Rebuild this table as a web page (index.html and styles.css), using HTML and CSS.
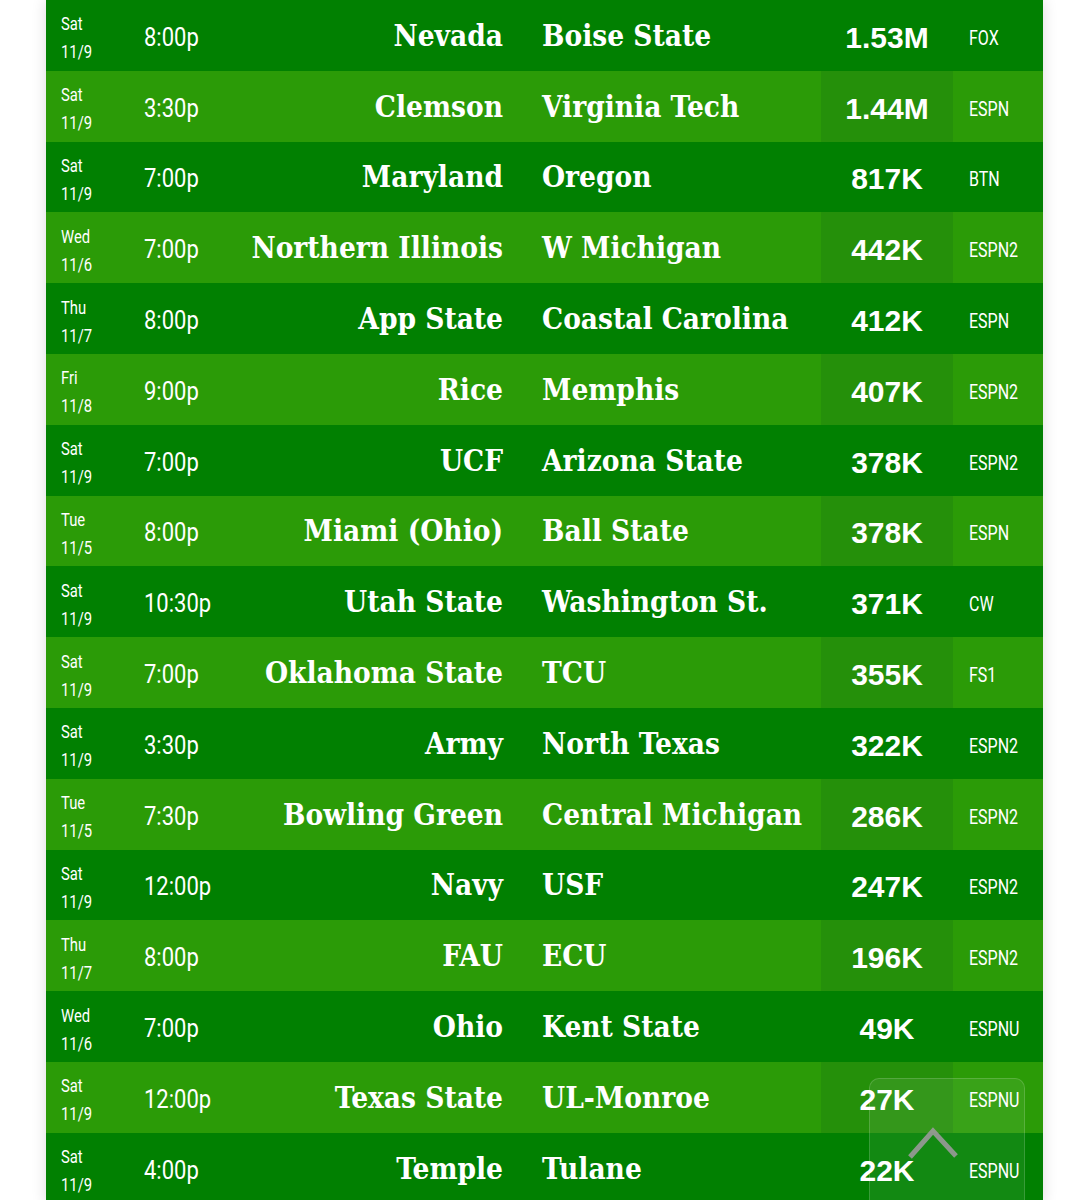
FILE: index.html
```html
<!DOCTYPE html>
<html>
<head>
<meta charset="utf-8">
<link rel="stylesheet" href="styles.css">
</head>
<body>
<div class="page">
  <div class="table">
    <div class="row dark"><div class="date">Sat<br>11/9</div><div class="time">8:00p</div><div class="home">Nevada</div><div class="away">Boise State</div><div class="views">1.53M</div><div class="net">FOX</div></div>
    <div class="row light"><div class="date">Sat<br>11/9</div><div class="time">3:30p</div><div class="home">Clemson</div><div class="away">Virginia Tech</div><div class="views">1.44M</div><div class="net">ESPN</div></div>
    <div class="row dark"><div class="date">Sat<br>11/9</div><div class="time">7:00p</div><div class="home">Maryland</div><div class="away">Oregon</div><div class="views">817K</div><div class="net">BTN</div></div>
    <div class="row light"><div class="date">Wed<br>11/6</div><div class="time">7:00p</div><div class="home">Northern Illinois</div><div class="away">W Michigan</div><div class="views">442K</div><div class="net">ESPN2</div></div>
    <div class="row dark"><div class="date">Thu<br>11/7</div><div class="time">8:00p</div><div class="home">App State</div><div class="away">Coastal Carolina</div><div class="views">412K</div><div class="net">ESPN</div></div>
    <div class="row light"><div class="date">Fri<br>11/8</div><div class="time">9:00p</div><div class="home">Rice</div><div class="away">Memphis</div><div class="views">407K</div><div class="net">ESPN2</div></div>
    <div class="row dark"><div class="date">Sat<br>11/9</div><div class="time">7:00p</div><div class="home">UCF</div><div class="away">Arizona State</div><div class="views">378K</div><div class="net">ESPN2</div></div>
    <div class="row light"><div class="date">Tue<br>11/5</div><div class="time">8:00p</div><div class="home">Miami (Ohio)</div><div class="away">Ball State</div><div class="views">378K</div><div class="net">ESPN</div></div>
    <div class="row dark"><div class="date">Sat<br>11/9</div><div class="time">10:30p</div><div class="home">Utah State</div><div class="away">Washington St.</div><div class="views">371K</div><div class="net">CW</div></div>
    <div class="row light"><div class="date">Sat<br>11/9</div><div class="time">7:00p</div><div class="home">Oklahoma State</div><div class="away">TCU</div><div class="views">355K</div><div class="net">FS1</div></div>
    <div class="row dark"><div class="date">Sat<br>11/9</div><div class="time">3:30p</div><div class="home">Army</div><div class="away">North Texas</div><div class="views">322K</div><div class="net">ESPN2</div></div>
    <div class="row light"><div class="date">Tue<br>11/5</div><div class="time">7:30p</div><div class="home">Bowling Green</div><div class="away">Central Michigan</div><div class="views">286K</div><div class="net">ESPN2</div></div>
    <div class="row dark"><div class="date">Sat<br>11/9</div><div class="time">12:00p</div><div class="home">Navy</div><div class="away">USF</div><div class="views">247K</div><div class="net">ESPN2</div></div>
    <div class="row light"><div class="date">Thu<br>11/7</div><div class="time">8:00p</div><div class="home">FAU</div><div class="away">ECU</div><div class="views">196K</div><div class="net">ESPN2</div></div>
    <div class="row dark"><div class="date">Wed<br>11/6</div><div class="time">7:00p</div><div class="home">Ohio</div><div class="away">Kent State</div><div class="views">49K</div><div class="net">ESPNU</div></div>
    <div class="row light"><div class="date">Sat<br>11/9</div><div class="time">12:00p</div><div class="home">Texas State</div><div class="away">UL-Monroe</div><div class="views">27K</div><div class="net">ESPNU</div></div>
    <div class="row dark"><div class="date">Sat<br>11/9</div><div class="time">4:00p</div><div class="home">Temple</div><div class="away">Tulane</div><div class="views">22K</div><div class="net">ESPNU</div></div>
  </div>
  <div class="totop">
    <svg width="156" height="156" viewBox="0 0 156 156"><polyline points="41,79 64,53 87,78" fill="none" stroke="#9a9a9a" stroke-opacity="0.9" stroke-width="5"/></svg>
  </div>
</div>
</body>
</html>
```
FILE: styles.css
```css
html, body { margin: 0; padding: 0; background: #fff; }
body { width: 1088px; height: 1200px; overflow: hidden; }
.page { position: relative; width: 1088px; height: 1200px; }
.table {
  margin-left: 46px;
  width: 997px;
  box-shadow: 0 0 14px rgba(0,0,0,0.14);
}
.row {
  display: grid;
  grid-template-columns: 98px 96px 263px 318px 132px 90px;
  height: 70.8px;
  color: #fff;
  align-items: center;
}
.row.dark { background: #018001; }
.row.light { background: #2b9b07; }
.row.light .views { background: #25900a; }
.date, .time, .net {
  font-family: Roboto, "DejaVu Sans Condensed", sans-serif;
  transform-origin: left center;
  white-space: nowrap;
}
.date {
  font-size: 18.5px;
  line-height: 28px;
  margin-top: 6px;
  transform: translateX(15px) scaleX(0.8);
}
.time {
  font-size: 25px;
  transform: scaleX(0.88);
  margin-top: 4px;
}
.home, .away {
  font-family: "DejaVu Serif Condensed", "DejaVu Serif", serif;
  font-weight: bold;
  font-size: 29.5px;
  white-space: nowrap;
  margin-top: 0;
}
.home { text-align: right; }
.away { padding-left: 39px; }
.views {
  height: 100%;
  display: flex;
  align-items: center;
  justify-content: center;
  font-family: "Liberation Sans", Arial, sans-serif;
  font-weight: bold;
  font-size: 30px;
  padding-top: 5px;
  box-sizing: border-box;
}
.net {
  font-size: 20px;
  margin-top: 5px;
  transform: translateX(16px) scaleX(0.8);
}
.totop {
  position: absolute;
  left: 869px;
  top: 1078px;
  width: 156px;
  height: 156px;
  border-radius: 10px;
  background: rgba(255,255,255,0.07);
  border: 1px solid rgba(255,255,255,0.16);
  box-sizing: border-box;
}
.totop svg { display: block; margin: -1px; }
```
